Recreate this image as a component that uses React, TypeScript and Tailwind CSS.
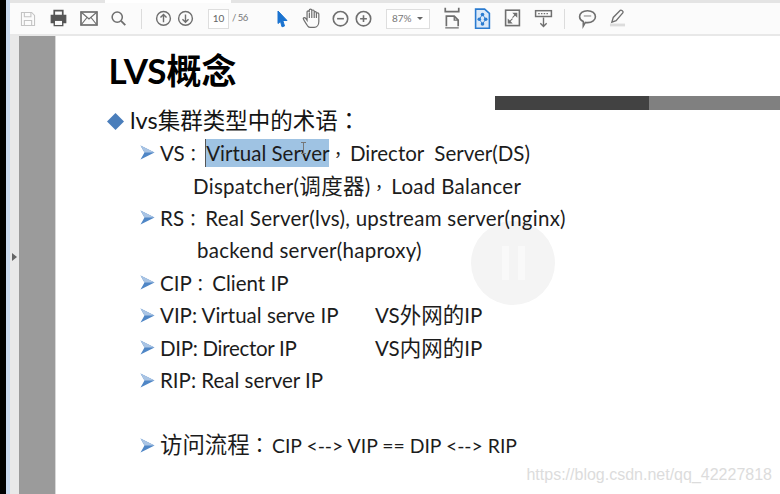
import React from "react";

const G = "#6f6f6f";

function Ic({ x, w, vw, children }: { x: number; w: number; vw: number; children: React.ReactNode }) {
  return (
    <svg width={w} height={(22 * w) / vw} viewBox={`0 0 ${vw} 22`} fill="none" stroke={G} strokeWidth={1.5} className="shrink-0" style={{ marginLeft: x }}>
      {children}
    </svg>
  );
}

function Sep({ x }: { x: number }) {
  return <div className="w-px h-[20px] bg-[#dcdcdc] shrink-0" style={{ marginLeft: x }} />;
}

function Bullet() {
  return (
    <svg width="15" height="17" viewBox="0 0 15 17" className="shrink-0 mr-[5px]">
      <path d="M0.5 1.5L14.5 8.5L0.5 15.5L4.5 8.5Z" fill="#4f86c6" />
      <path d="M0.5 1.5L14.5 8.5L4.5 8.5Z" fill="#a9c4e4" />
    </svg>
  );
}

function P({ children }: { children: React.ReactNode }) {
  return <span className="font-['Noto_Sans_CJK_TC'] text-[17px] pr-[3.5px]">{children}</span>;
}

function C({ children }: { children: React.ReactNode }) {
  return <span className="text-[21.5px]">{children}</span>;
}

function Row({ children, bullet = true, pad = 0, track = 0, top = 0 }: { children: React.ReactNode; bullet?: boolean; pad?: number; track?: number; top?: number }) {
  return (
    <div className="flex items-center h-[32.5px] whitespace-pre text-[20.5px] text-[#1c1c1c] ml-[140px]" style={{ paddingLeft: pad, letterSpacing: track }}>
      {bullet && <Bullet />}
      <span style={{ paddingTop: top }}>{children}</span>
    </div>
  );
}

export default function App() {
  return (
    <div
      className="relative flex w-[780px] h-[494px] overflow-hidden bg-white"
      style={{ fontFamily: '"Lato","Noto Sans CJK SC",sans-serif' }}
    >
      <div className="w-[6px] bg-black shrink-0" />
      <div className="w-[4px] bg-[#c9d9ef] shrink-0" />
      <div className="flex-1 flex flex-col min-w-0">
        <div className="flex h-[3px] shrink-0 bg-[#e4e4e4]">
          <div className="ml-[95px] w-[126px] bg-white" />
        </div>
        <div className="flex items-center h-[33px] shrink-0 bg-[#fbfbfb] border-b-2 border-[#e8e8e8]">
          <Ic x={10} w={16} vw={22}>
            <path d="M2 2H16L20 6V20H2Z" stroke="#c4c4c4" />
            <path d="M6 2V8H15V2M6 20V13H16V20" stroke="#c4c4c4" />
          </Ic>
          <Ic x={14} w={17} vw={20}>
            <path d="M5 7V2H15V7" strokeWidth={2} stroke="#555" />
            <path d="M1.5 7.5H18.5V16H15V13H5V16H1.5Z" fill="#555" stroke="#555" />
            <path d="M5 13H15V19.5H5Z" stroke="#555" strokeWidth={1.6} />
          </Ic>
          <Ic x={12} w={20} vw={20}>
            <rect x="2" y="4" width="16" height="13" strokeWidth={1.7} />
            <path d="M2 4L10 11L18 4M2 17L8 9.5M18 17L12 9.5" strokeWidth={1.2} />
          </Ic>
          <Ic x={11} w={17} vw={20}>
            <circle cx="8.5" cy="9.5" r="6" strokeWidth={1.8} />
            <path d="M13 14L18 19" strokeWidth={2.2} />
          </Ic>
          <Sep x={14} />
          <Ic x={13} w={17} vw={18}>
            <circle cx="9" cy="11" r="7.3" />
            <path d="M9 15V7M5.8 10L9 6.8L12.2 10" />
          </Ic>
          <Ic x={5} w={17} vw={18}>
            <circle cx="9" cy="11" r="7.3" />
            <path d="M9 7V15M5.8 12L9 15.2L12.2 12" />
          </Ic>
          <div className="ml-[14px] w-[21px] h-[20px] bg-white border border-[#dedede] flex items-center justify-center text-[10px] text-[#666] shrink-0">10</div>
          <span className="ml-[3px] w-[27px] text-[9.5px] tracking-[-0.5px] text-[#777] whitespace-pre shrink-0">/ 56</span>
          <Ic x={15} w={16} vw={16}>
            <path d="M4 3L13 12.5H8.8L10.5 18L8 18.8L6.5 13.5L4 15.5Z" fill="#1a73d0" stroke="#1a73d0" strokeWidth={1} />
          </Ic>
          <Ic x={11} w={22} vw={20}>
            <path d="M6 18C4 15 2.5 13 2 11.5C2 10.3 3.6 10.3 4.5 11.5L5.5 13V5.5C5.5 4 7.5 4 7.5 5.5V3.8C7.5 2.4 9.8 2.4 9.8 3.8V4.5C9.8 3.3 12 3.3 12 4.8V6C12 4.8 14 4.8 14 6.3V7C14 6 16.2 6 16.2 7.3V14C16.2 17 14.5 19.5 12 19.5H8.5C7.5 19.5 6.7 19 6 18Z M7.6 6V11M9.8 4.5V11M12 5V11M14 7V11" strokeWidth={1.1} />
          </Ic>
          <Ic x={9} w={17} vw={16}>
            <circle cx="8" cy="11" r="6.8" />
            <path d="M4.8 11H11.2" />
          </Ic>
          <Ic x={6} w={17} vw={16}>
            <circle cx="8" cy="11" r="6.8" />
            <path d="M4.8 11H11.2M8 7.8V14.2" />
          </Ic>
          <div className="ml-[14px] w-[44px] h-[20px] bg-white border border-[#dedede] flex items-center justify-between pl-[5px] pr-[6px] text-[10px] text-[#777] shrink-0">
            <span>87%</span>
            <span className="w-0 h-0 border-x-[3px] border-x-transparent border-t-[3px] border-t-[#666]" />
          </div>
          <Ic x={13} w={18} vw={16}>
            <path d="M2 1.5V5H14V1.5" />
            <path d="M3 18V9H10L13.5 12.5V18" />
            <path d="M10 9V12.5H13.5M2 19.5H14" strokeWidth={1.2} />
          </Ic>
          <Ic x={12.5} w={17} vw={16}>
            <path d="M1.5 2H10L14.5 6V20H1.5Z" stroke="#2a7bd0" fill="#dbe9f8" />
            <path d="M8 7L5 11.5L8 16L11 11.5Z" stroke="#2a7bd0" strokeWidth={0.8} />
            <circle cx="8" cy="7" r="1.7" fill="#2a7bd0" stroke="none" />
            <circle cx="5" cy="11.5" r="1.7" fill="#2a7bd0" stroke="none" />
            <circle cx="11" cy="11.5" r="1.7" fill="#2a7bd0" stroke="none" />
            <circle cx="8" cy="16" r="1.7" fill="#2a7bd0" stroke="none" />
          </Ic>
          <Ic x={13} w={17} vw={16}>
            <rect x="1.5" y="3" width="13" height="14.5" strokeWidth={1.5} />
            <path d="M9 6H12V9L9 6ZM4 12V15H7L4 12Z" fill={G} stroke={G} strokeWidth={1} />
            <path d="M10.5 7.5L8 10M5.5 13.5L8 11" strokeWidth={1} />
          </Ic>
          <Ic x={13.5} w={19} vw={18}>
            <rect x="1.5" y="3.5" width="15" height="5.5" strokeWidth={1.4} />
            <path d="M4 6.2H14" strokeDasharray="1.4 1.2" strokeWidth={1.2} />
            <path d="M9 10V18M6 15.5L9 18.5L12 15.5" strokeWidth={1.3} />
          </Ic>
          <Sep x={11} />
          <Ic x={13} w={19} vw={18}>
            <path d="M9 3.5C13.5 3.5 16.5 6 16.5 9.2C16.5 12.4 13.5 14.8 9 14.8C8.3 14.8 7.7 14.8 7 14.6L5 18V13.8C3 12.8 1.5 11.2 1.5 9.2C1.5 6 4.5 3.5 9 3.5Z" strokeWidth={1.5} />
            <path d="M5.5 8.5H12.5" strokeWidth={1.2} stroke="#999" />
          </Ic>
          <Ic x={12} w={17} vw={18}>
            <path d="M3 15L4.5 10L12 2.5C13 1.7 15.5 3.7 14.8 5L7.5 13.5Z" strokeWidth={1.4} />
            <rect x="1" y="16.5" width="16" height="3" fill="#dcdcdc" stroke="none" />
          </Ic>
        </div>
        <div className="flex-1 flex min-h-0">
          <div className="w-[9px] bg-[#e9e9e9] shrink-0 flex items-center">
            <span className="ml-[2px] mt-[-17px] w-0 h-0 border-y-[4px] border-y-transparent border-l-[5px] border-l-[#666]" />
          </div>
          <div className="w-[37px] bg-[#9b9b9b] border-r border-[#d8d8d8] shrink-0" />
          <div className="relative flex-1 flex flex-col min-w-0">
            <div className="ml-[52.5px] pt-[11px] h-[60px] text-[35px] leading-[46px] font-bold text-black whitespace-pre shrink-0">LVS概念</div>
            <div className="flex h-[14px] ml-[439px] shrink-0">
              <div className="w-[154px] bg-[#424242]" />
              <div className="flex-1 bg-[#808080]" />
            </div>
            <div className="absolute left-[415px] top-[185px] w-[84px] h-[84px] rounded-full bg-[#f4f4f4] flex items-center justify-center gap-[9px]">
              <span className="w-[7px] h-[34px] bg-[#f9f9f9]" />
              <span className="w-[7px] h-[34px] bg-[#f9f9f9]" />
            </div>
            <div className="relative flex items-center h-[32px] mt-[-5px] ml-[51px] text-[23.5px] text-[#141414] whitespace-pre shrink-0">
              <svg width="17" height="17" viewBox="0 0 17 17" className="shrink-0 mr-[6px]">
                <path d="M8.5 0L17 8.5L8.5 17L0 8.5Z" fill="#4a7ebb" />
              </svg>
              <span>lvs<span className="text-[22.5px]">集群类型中的术语<span className="font-['Noto_Sans_CJK_TC']">：</span></span></span>
            </div>
            <div className="relative -ml-[56px] -mt-[0.6px]">
              <Row top={2}>
                VS<P>：</P>
                <span className="relative bg-[#9fc3e3] py-[2px] border-l border-[#555]">
                  Virtual Server
                  <svg width="7" height="12" viewBox="0 0 7 12" className="absolute left-[94px] top-[3px]" fill="none" stroke="#777" strokeWidth={1}>
                    <path d="M1 0.5H6M1 11.5H6M3.5 0.5V11.5" />
                  </svg>
                </span>
                <P>，</P>Director  Server(DS)
              </Row>
              <Row bullet={false} pad={53} track={0.3} top={2}>Dispatcher(<C>调度器</C>)<P>，</P>Load Balancer</Row>
              <Row track={0.26} top={2}>RS<P>：</P>Real Server(lvs), upstream server(nginx)</Row>
              <Row bullet={false} pad={57} track={0.27}>backend server(haproxy)</Row>
              <Row top={2}>CIP<P>：</P>Client IP</Row>
              <Row>
                <span className="inline-block w-[215px]">VIP: Virtual serve IP</span>VS<C>外网的</C>IP
              </Row>
              <Row>
                <span className="inline-block w-[215px] tracking-[-0.3px]">DIP: Director IP</span>VS<C>内网的</C>IP
              </Row>
              <Row>RIP: Real server IP</Row>
              <div className="h-[32.5px]" />
              <Row>
                <span className="text-[22.4px]">访问流程<span className="font-['Noto_Sans_CJK_TC'] text-[20px] pr-[2.4px]">：</span></span>
                <span className="text-[19.4px]">CIP &lt;--&gt; VIP == DIP &lt;--&gt; RIP</span>
              </Row>
            </div>
            <div
              className="absolute right-[8px] bottom-[7px] text-[16px] text-[#dcdcdc] whitespace-pre"
              style={{ fontFamily: '"Liberation Sans",sans-serif' }}
            >
              https://blog.csdn.net/qq_42227818
            </div>
          </div>
        </div>
      </div>
    </div>
  );
}
